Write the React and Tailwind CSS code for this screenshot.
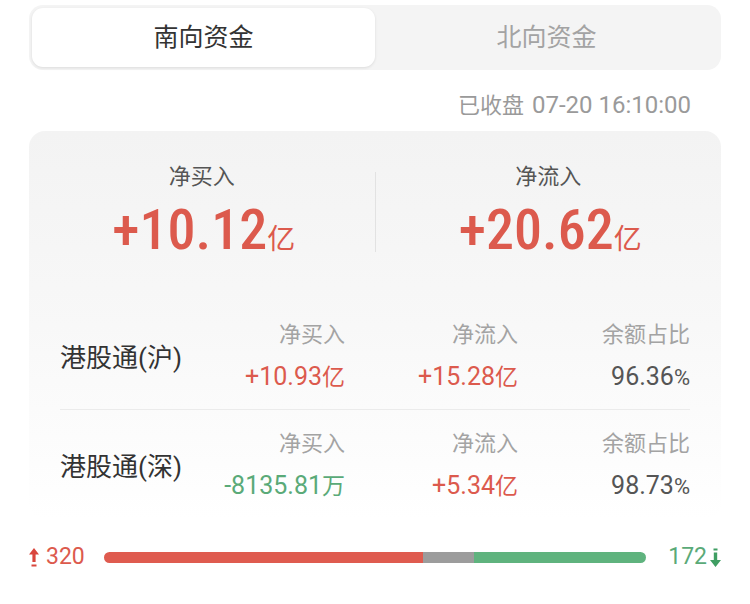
import React from "react";

const FONT = {
  fontFamily: 'Roboto, "Noto Sans CJK SC", "Noto Sans", sans-serif',
};
const BIG = {
  fontFamily: '"Roboto Condensed", Roboto, "Noto Sans CJK SC", sans-serif',
};

const ROWS = [
  {
    name: "港股通(沪)",
    buy: { num: "+10.93", unit: "亿", up: true },
    flow: { num: "+15.28", unit: "亿", up: true },
    ratio: "96.36",
  },
  {
    name: "港股通(深)",
    buy: { num: "-8135.81", unit: "万", up: false },
    flow: { num: "+5.34", unit: "亿", up: true },
    ratio: "98.73",
  },
];

const UpArrow = () => (
  <svg width="10" height="19" viewBox="0 0 10 19" className="text-[#d9463d]">
    <path d="M5 0 L10 6.5 H6.6 V14 H3.4 V6.5 H0 Z" fill="currentColor" />
    <rect x="2.5" y="16.5" width="5" height="2" fill="currentColor" />
  </svg>
);

const DownArrow = () => (
  <svg width="11" height="19" viewBox="0 0 11 19" className="text-[#3f9e63]">
    <rect x="3.5" y="0.5" width="4" height="2" fill="currentColor" />
    <path d="M3.8 4.5 H7.2 V12 H11 L5.5 19 L0 12 H3.8 Z" fill="currentColor" />
  </svg>
);

const Value = ({ v }) => (
  <span className={v.up ? "text-[#dc5a4d]" : "text-[#5aaa78]"}>
    {v.num}
    <span className="text-[23px]">{v.unit}</span>
  </span>
);

const BigStat = ({ label, num }) => (
  <div className="flex-1 flex flex-col items-center">
    <div className="text-[22px] leading-[30px] text-[#555]">{label}</div>
    <div
      className="mt-[7px] leading-[62px] text-[56px] font-medium text-[#dc5a4d] pl-[4px]"
      style={BIG}
    >
      {num}
      <span className="text-[28px] font-normal" style={FONT}>
        亿
      </span>
    </div>
  </div>
);

export default function App() {
  return (
    <div className="w-[750px] h-[604px] bg-white px-[29px] pt-[5px]" style={FONT}>
      {/* tabs */}
      <div className="h-[65px] rounded-[14px] bg-[#f4f4f4] p-[3px] flex">
        <div className="flex-1 bg-white rounded-[11px] shadow-[0_1px_3px_rgba(0,0,0,0.1)] flex items-center justify-center text-[25px] text-[#333]">
          南向资金
        </div>
        <div className="flex-1 flex items-center justify-center text-[25px] text-[#a3a3a3]">
          北向资金
        </div>
      </div>

      <div className="h-[61px] flex items-center justify-end pr-[30px] pt-[9px] text-[22px] text-[#9a9a9a]">
        已收盘 <span className="ml-[8px] text-[24px]">07-20 16:10:00</span>
      </div>

      {/* card */}
      <div className="h-[388px] rounded-[16px] bg-gradient-to-b from-[#f3f3f3] via-[#f8f8f8] to-white">
        <div className="flex pt-[31px] h-[170px]">
          <BigStat label="净买入" num="+10.12" />
          <div className="w-px bg-[#e2e2e2] mt-[10px] h-[80px]" />
          <BigStat label="净流入" num="+20.62" />
        </div>

        <div className="px-[31px]">
          {ROWS.map((r, i) => (
            <div
              key={r.name}
              className={
                "flex h-[109px] " + (i === 0 ? "border-b border-[#ebebeb]" : "")
              }
            >
              <div className="flex-1 pt-[40px] text-[26px] leading-[34px] text-[#333]">
                {r.name}
              </div>
              <div className="w-[145px] text-right pt-[19px]">
                <div className="text-[22px] leading-[30px] text-[#a3a3a3]">净买入</div>
                <div className="mt-[12px] text-[25px] leading-[30px]">
                  <Value v={r.buy} />
                </div>
              </div>
              <div className="w-[173px] text-right pt-[19px]">
                <div className="text-[22px] leading-[30px] text-[#a3a3a3]">净流入</div>
                <div className="mt-[12px] text-[25px] leading-[30px]">
                  <Value v={r.flow} />
                </div>
              </div>
              <div className="w-[172px] text-right pt-[19px]">
                <div className="text-[22px] leading-[30px] text-[#a3a3a3]">余额占比</div>
                <div className="mt-[12px] text-[25px] leading-[30px] text-[#555]">
                  {r.ratio}
                  <span className="text-[22px]">%</span>
                </div>
              </div>
            </div>
          ))}
        </div>
      </div>

      {/* up/down bar */}
      <div className="flex items-center h-[30px] mt-[23px]">
        <div className="w-[75px] flex items-center gap-[7px] text-[23px] text-[#dc5a4d]">
          <UpArrow />
          <span>320</span>
        </div>
        <div className="flex h-[11px] w-[542px] rounded-full overflow-hidden">
          <div className="w-[319px] bg-[#df5b4f]" />
          <div className="w-[51px] bg-[#9c9c9c]" />
          <div className="flex-1 bg-[#5fb37e]" />
        </div>
        <div className="flex-1 flex items-center justify-end gap-[3px] text-[23px] text-[#5aaa78]">
          <span>172</span>
          <DownArrow />
        </div>
      </div>
    </div>
  );
}
